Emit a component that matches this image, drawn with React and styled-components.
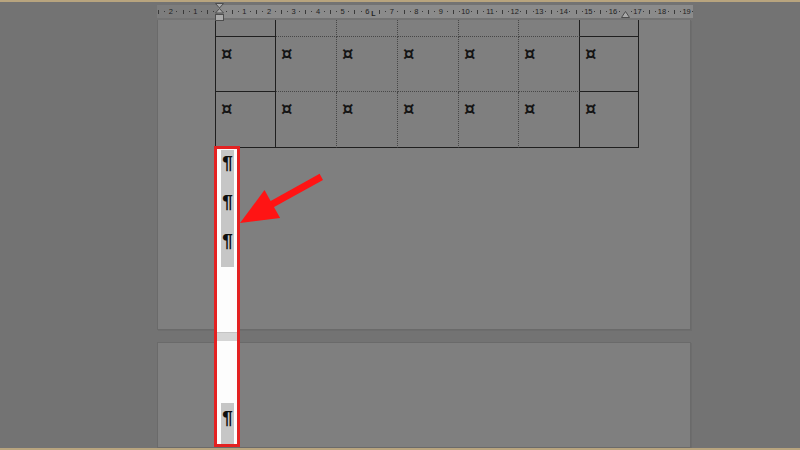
import React from 'react'
import styled, { createGlobalStyle } from 'styled-components'

const UNIT = 6.15
const TICKS = Array.from({ length: 88 }, (_, i) => i - 10)
const COLUMNS = [60, 61, 61, 61, 60, 61, 59]
const ROWS = [17, 55, 56]

function RulerMark({ k }) {
  if (k === 0) {
    return (
      <Slot>
        <IndentMarker width="9" height="19" viewBox="0 0 9 19">
          <path d="M0.5 0.5 H8.5 L4.5 5 Z" fill="#a9a9a9" stroke="#4d4d4d" strokeWidth="1" />
          <path d="M4.5 5.5 L8.5 10 H0.5 Z" fill="#a9a9a9" stroke="#4d4d4d" strokeWidth="1" />
          <rect x="0.5" y="11.5" width="8" height="6" fill="#a9a9a9" stroke="#4d4d4d" strokeWidth="1" />
        </IndentMarker>
      </Slot>
    )
  }
  if (k === 25) return <Slot><TabStop>L</TabStop></Slot>
  if (k === 66) {
    return (
      <Slot>
        <RightIndent width="9" height="7" viewBox="0 0 9 7">
          <path d="M4.5 0.5 L8.5 6.5 H0.5 Z" fill="#a9a9a9" stroke="#4d4d4d" strokeWidth="1" />
        </RightIndent>
      </Slot>
    )
  }
  if (k % 4 === 0) return <Slot><Num>{Math.abs(k / 4)}</Num></Slot>
  if (Math.abs(k) % 4 === 2) return <Slot><Bar /></Slot>
  return <Slot><Dot /></Slot>
}

function Cell({ col, row, mark }) {
  const edge = col === 0 || col >= 5
  const bottomSolid = row === 2 || col === 0 || col === 6
  return (
    <TableCell $solidRight={edge} $solidBottom={bottomSolid}>
      {mark && <CellMark>¤</CellMark>}
    </TableCell>
  )
}

function App() {
  return (
    <Frame>
      <GlobalStyle />
      <Ruler>
        <RulerTrack>
          {TICKS.map(k => <RulerMark key={k} k={k} />)}
        </RulerTrack>
      </Ruler>
      <Pages>
        <Page $first>
          <Table>
            {ROWS.map((_, row) =>
              COLUMNS.map((_, col) => (
                <Cell key={`${row}-${col}`} row={row} col={col} mark={row > 0} />
              ))
            )}
          </Table>
        </Page>
        <Page />
      </Pages>

      <Highlight>
        <MarkGroup>
          <MarkLine><Pilcrow>¶</Pilcrow></MarkLine>
          <MarkLine><Pilcrow>¶</Pilcrow></MarkLine>
          <MarkLine><Pilcrow>¶</Pilcrow></MarkLine>
        </MarkGroup>
        <Blank $h={65} />
        <PageGap />
        <Blank $h={61} />
        <MarkGroup>
          <MarkLine $last><Pilcrow>¶</Pilcrow></MarkLine>
        </MarkGroup>
      </Highlight>

      <Arrow width="100" height="70" viewBox="0 0 100 70">
        <line x1="39.7" y1="40.5" x2="91.3" y2="11.9" stroke="#ff1414" strokeWidth="7" />
        <polygon points="10,58 34.5,25.1 50.1,53.1" fill="#ff1414" />
      </Arrow>
    </Frame>
  )
}

const GlobalStyle = createGlobalStyle`
  html, body {
    margin: 0;
    padding: 0;
    background: #737373;
  }
  body {
    width: 800px;
    height: 450px;
    overflow: hidden;
    font-family: "Liberation Sans", Arial, sans-serif;
  }
`

const Frame = styled.div`
  position: relative;
  width: 800px;
  height: 450px;
  box-sizing: border-box;
  background: #737373;
  border-top: 2px solid #b8a47e;
  border-bottom: 2px solid #b8a47e;
  overflow: hidden;
  display: flex;
  flex-direction: column;
`
const Ruler = styled.div`
  margin: 3px 0 0 157px;
  width: 536px;
  height: 13px;
  background: linear-gradient(to right, #7d7d7d 0, #7d7d7d 61px, #8b8b8b 61px);
  position: relative;
  z-index: 2;
`
const RulerTrack = styled.div`
  display: flex;
  height: 100%;
  margin-left: -1.6px;
`
const Slot = styled.div`
  position: relative;
  flex: 0 0 ${UNIT}px;
  width: ${UNIT}px;
  min-width: 0;
  display: flex;
  align-items: center;
  justify-content: center;
  height: 100%;
`
const Num = styled.span`
  font-size: 7.5px;
  line-height: 1;
  color: #222;
  white-space: nowrap;
`
const Dot = styled.span`
  width: 1px;
  height: 1px;
  background: #3a3a3a;
`
const Bar = styled.span`
  width: 1px;
  height: 4px;
  background: #3a3a3a;
`
const TabStop = styled.span`
  font-size: 7px;
  font-weight: 700;
  line-height: 1;
  color: #222;
  transform: translateY(2px);
`
const IndentMarker = styled.svg`
  position: absolute;
  top: -2px;
  left: -1.5px;
`
const RightIndent = styled.svg`
  position: absolute;
  bottom: 0;
  left: -1.5px;
`
const Pages = styled.div`
  flex: 1;
  margin: 2px 0 0 157px;
  width: 534px;
  display: flex;
  flex-direction: column;
  gap: 12px;
`
const Page = styled.div`
  box-sizing: border-box;
  background: #7f7f7f;
  border: 1px solid #6a6a6a;
  border-top: ${p => (p.$first ? 'none' : '1px solid #6a6a6a')};
  box-shadow: 1px 1px 0 #6d6d6d;
  height: ${p => (p.$first ? '310px' : 'auto')};
  flex: ${p => (p.$first ? '0 0 auto' : '1')};
`
const Table = styled.div`
  display: grid;
  grid-template-columns: ${COLUMNS.map(w => `${w}px`).join(' ')};
  grid-template-rows: ${ROWS.map(h => `${h}px`).join(' ')};
  margin-left: 57px;
  width: max-content;
  border-left: 1px solid #1f1f1f;
`
const TableCell = styled.div`
  box-sizing: border-box;
  padding: 8px 0 0 5px;
  border-right: 1px ${p => (p.$solidRight ? 'solid #1f1f1f' : 'dotted #474747')};
  border-bottom: 1px ${p => (p.$solidBottom ? 'solid #1f1f1f' : 'dotted #474747')};
`
const CellMark = styled.span`
  display: block;
  font-family: "DejaVu Sans", sans-serif;
  font-size: 18px;
  font-weight: 700;
  line-height: 18px;
  color: #141414;
`
const Highlight = styled.div`
  position: absolute;
  left: 214px;
  top: 144px;
  width: 26px;
  height: 301px;
  box-sizing: border-box;
  border: 3px solid #e32222;
  background: #fdfdfd;
  display: flex;
  flex-direction: column;
`
const MarkGroup = styled.div`
  margin: 1px 0 0 4px;
  width: 13px;
  background: #c6c6c6;
`
const MarkLine = styled.div`
  height: ${p => (p.$last ? '41px' : '39px')};
  padding-top: ${p => (p.$last ? '5px' : '3px')};
  box-sizing: border-box;
  display: flex;
  justify-content: center;
`
const Pilcrow = styled.span`
  font-size: 19px;
  font-weight: 700;
  line-height: 19px;
  color: #0e0e0e;
`
const Blank = styled.div`
  height: ${p => p.$h}px;
  flex: 0 0 auto;
`
const PageGap = styled.div`
  height: 10px;
  background: #d5d5d5;
  border-top: 1px solid #c4c4c4;
  box-sizing: border-box;
`
const Arrow = styled.svg`
  position: absolute;
  left: 230px;
  top: 163px;
`

export default App
